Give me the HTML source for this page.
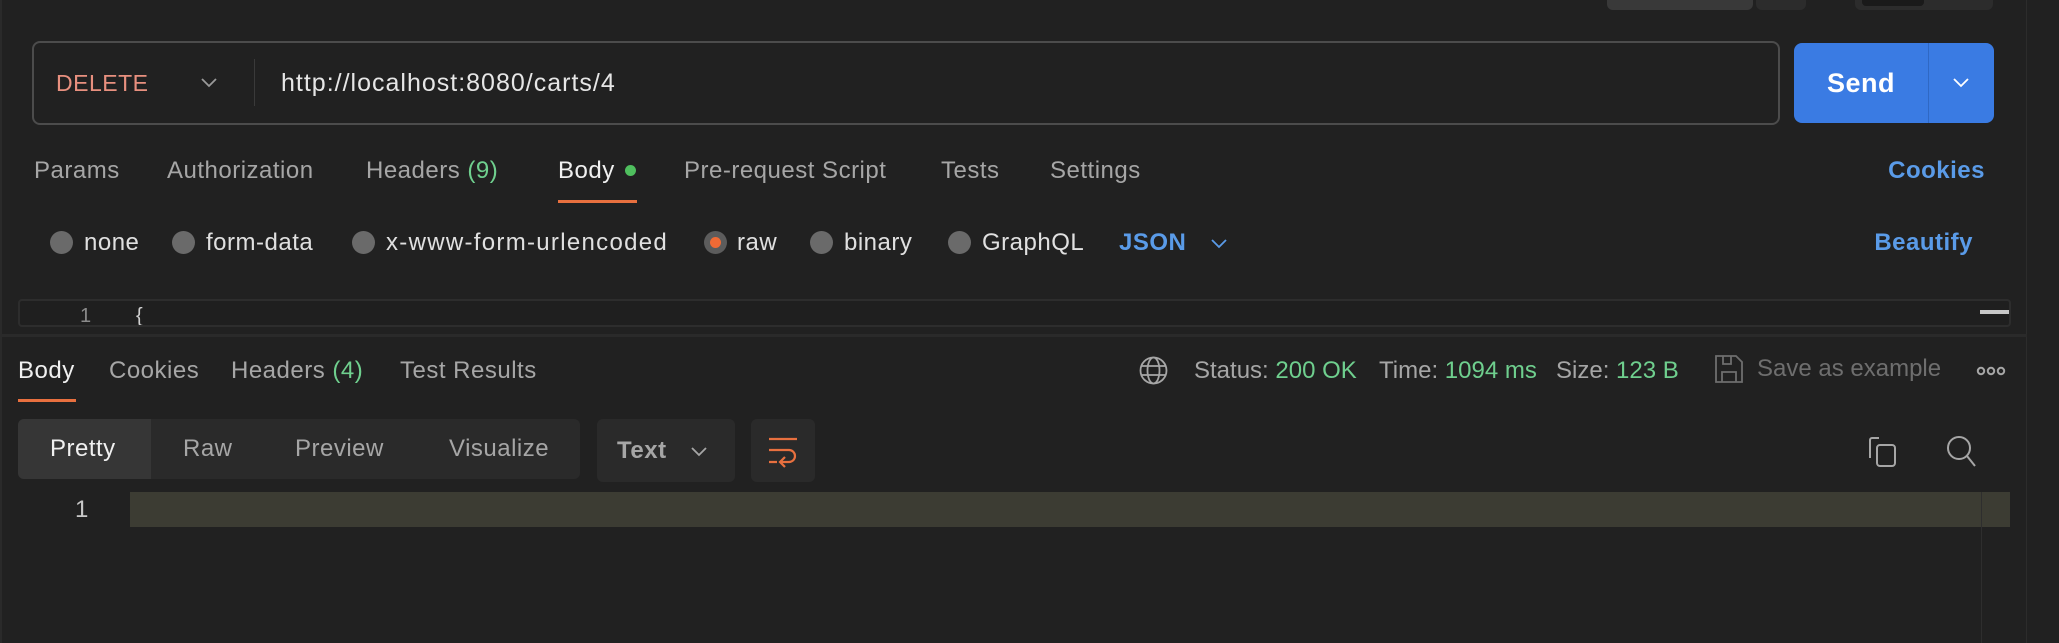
<!DOCTYPE html>
<html><head><meta charset="utf-8"><style>
*{margin:0;padding:0;box-sizing:border-box}
body{width:2059px;height:643px;background:#212121;position:relative;overflow:hidden;font-family:"Liberation Sans",sans-serif;color:#a6a6a6;font-size:24px}
.a{position:absolute;white-space:nowrap}
.t{position:absolute;white-space:nowrap;height:30px;line-height:30px;letter-spacing:0.5px}
.g{color:#6fcf8e}
.b{color:#5a9be8;font-weight:bold}
.r{position:absolute;width:23px;height:23px;border-radius:50%;background:#6a6a6a}
</style></head><body>
<div class="a" style="left:0;top:0;width:2px;height:643px;background:#2a2a2a"></div>
<div class="a" style="left:2026px;top:0;width:1px;height:643px;background:#2c2c2c"></div>
<div class="a" style="left:1607px;top:0;width:146px;height:10px;background:#393939;border-radius:0 0 6px 6px"></div>
<div class="a" style="left:1756px;top:0;width:50px;height:10px;background:#2c2c2c;border-radius:0 0 6px 6px"></div>
<div class="a" style="left:1855px;top:0;width:138px;height:10px;background:#2c2c2c;border-radius:0 0 6px 6px"></div>
<div class="a" style="left:1862px;top:0;width:62px;height:6px;background:#1a1a1a;border-radius:0 0 4px 4px"></div>
<div class="a" style="left:32px;top:41px;width:1748px;height:84px;border:2px solid #4c4c4c;border-radius:8px"></div>
<div class="t" style="left:56px;top:68px;color:#e8907f;font-size:23px">DELETE</div>
<svg class="a" style="left:199px;top:75px" width="20" height="14"><path d="M3 4l7 7 7-7" fill="none" stroke="#9a9a9a" stroke-width="1.8"/></svg>
<div class="a" style="left:254px;top:59px;width:1px;height:47px;background:#3a3a3a"></div>
<div class="t" style="left:281px;top:68px;color:#e6e6e6;font-size:25px;letter-spacing:1px">http://localhost:8080/carts/4</div>
<div class="a" style="left:1794px;top:43px;width:200px;height:80px;background:#3a7be3;border-radius:8px"></div>
<div class="a" style="left:1928px;top:43px;width:1px;height:80px;background:#2f68c4"></div>
<div class="t" style="left:1827px;top:68px;color:#fff;font-weight:bold;font-size:27px">Send</div>
<svg class="a" style="left:1951px;top:75px" width="20" height="14"><path d="M3 4l7 7 7-7" fill="none" stroke="#fff" stroke-width="1.8"/></svg>
<div class="t" style="left:34px;top:156px">Params</div>
<div class="t" style="left:167px;top:156px">Authorization</div>
<div class="t" style="left:366px;top:156px">Headers <span class="g">(9)</span></div>
<div class="t" style="left:558px;top:156px;color:#f0f0f0">Body</div>
<div class="a" style="left:625px;top:165px;width:11px;height:11px;border-radius:50%;background:#4fbf5e"></div>
<div class="t" style="left:684px;top:156px">Pre-request Script</div>
<div class="t" style="left:941px;top:156px">Tests</div>
<div class="t" style="left:1050px;top:156px">Settings</div>
<div class="t b" style="right:74px;top:156px">Cookies</div>
<div class="a" style="left:558px;top:200px;width:79px;height:3px;background:#e8703f"></div>
<div class="r" style="left:50px;top:231px"></div><div class="t" style="left:84px;top:228px;color:#e0e0e0">none</div>
<div class="r" style="left:172px;top:231px"></div><div class="t" style="left:206px;top:228px;color:#e0e0e0">form-data</div>
<div class="r" style="left:352px;top:231px"></div><div class="t" style="left:386px;top:228px;color:#e0e0e0;letter-spacing:1.3px">x-www-form-urlencoded</div>
<div class="r" style="left:704px;top:231px;background:#5c5c5c"></div><div class="a" style="left:710px;top:237px;width:11px;height:11px;border-radius:50%;background:#f06a35"></div><div class="t" style="left:737px;top:228px;color:#e0e0e0">raw</div>
<div class="r" style="left:810px;top:231px"></div><div class="t" style="left:844px;top:228px;color:#e0e0e0">binary</div>
<div class="r" style="left:948px;top:231px"></div><div class="t" style="left:982px;top:228px;color:#e0e0e0">GraphQL</div>
<div class="t b" style="left:1119px;top:228px">JSON</div>
<svg class="a" style="left:1209px;top:236px" width="20" height="14"><path d="M3 4l7 7 7-7" fill="none" stroke="#5a9be8" stroke-width="1.8"/></svg>
<div class="t b" style="right:86px;top:228px">Beautify</div>
<div class="a" style="left:18px;top:299px;width:1993px;height:28px;border:2px solid #2d2d2d;border-radius:4px;background:#1f1f1f;overflow:hidden">
<div class="a" style="left:60px;top:4px;font-size:20px;color:#8a8a8a">1</div>
<div class="a" style="left:116px;top:4px;font-size:20px;color:#cfcfcf">{</div>
<div class="a" style="left:1960px;top:9px;width:30px;height:4px;background:#c8c8c8"></div>
</div>
<div class="a" style="left:0;top:334px;width:2027px;height:3px;background:#2a2a2a"></div>
<div class="t" style="left:18px;top:356px;color:#f0f0f0">Body</div>
<div class="t" style="left:109px;top:356px">Cookies</div>
<div class="t" style="left:231px;top:356px">Headers <span class="g">(4)</span></div>
<div class="t" style="left:400px;top:356px">Test Results</div>
<div class="a" style="left:18px;top:399px;width:58px;height:3px;background:#e8703f"></div>
<svg class="a" style="left:1139px;top:356px" width="29" height="29" fill="none" stroke="#a6a6a6" stroke-width="1.8"><circle cx="14.5" cy="14.5" r="13"/><ellipse cx="14.5" cy="14.5" rx="6" ry="13"/><path d="M2 10h25M2 19h25"/></svg>
<div class="t" style="left:1194px;top:356px;letter-spacing:0">Status: <span class="g">200 OK</span></div>
<div class="t" style="left:1379px;top:356px;letter-spacing:0">Time: <span class="g">1094 ms</span></div>
<div class="t" style="left:1556px;top:356px;letter-spacing:0">Size: <span class="g">123 B</span></div>
<svg class="a" style="left:1714px;top:354px" width="30" height="30" fill="none" stroke="#6e6e6e" stroke-width="1.8"><path d="M2 2h20l6 6v20H2z M9 2v8h8V2 M8 28V18h14v10"/></svg>
<div class="t" style="left:1757px;top:354px;color:#6e6e6e;letter-spacing:0">Save as example</div>
<svg class="a" style="left:1976px;top:364px" width="30" height="14" fill="none" stroke="#a6a6a6" stroke-width="2"><circle cx="5" cy="7" r="3.2"/><circle cx="15" cy="7" r="3.2"/><circle cx="25" cy="7" r="3.2"/></svg>
<div class="a" style="left:18px;top:419px;width:562px;height:60px;background:#2a2a2a;border-radius:6px"></div>
<div class="a" style="left:18px;top:419px;width:133px;height:60px;background:#363636;border-radius:6px 0 0 6px"></div>
<div class="t" style="left:50px;top:434px;color:#f0f0f0">Pretty</div>
<div class="t" style="left:183px;top:434px">Raw</div>
<div class="t" style="left:295px;top:434px">Preview</div>
<div class="t" style="left:449px;top:434px">Visualize</div>
<div class="a" style="left:597px;top:419px;width:138px;height:63px;background:#2a2a2a;border-radius:6px"></div>
<div class="t" style="left:617px;top:436px;font-weight:bold;color:#a6a6a6">Text</div>
<svg class="a" style="left:689px;top:444px" width="20" height="14"><path d="M3 4l7 7 7-7" fill="none" stroke="#a6a6a6" stroke-width="1.8"/></svg>
<div class="a" style="left:751px;top:419px;width:64px;height:63px;background:#2a2a2a;border-radius:6px"></div>
<svg class="a" style="left:766px;top:436px" width="34" height="32" fill="none" stroke="#e8703f" stroke-width="2.2"><path d="M3 3h28 M3 14h20a6 6 0 0 1 0 12h-8 M19 21l-5 5 5 5 M3 26h8"/></svg>
<svg class="a" style="left:1868px;top:436px" width="30" height="32" fill="none" stroke="#a6a6a6" stroke-width="2"><path d="M11 2H4a2 2 0 0 0-2 2v18"/><rect x="9" y="9" width="18" height="21" rx="3"/></svg>
<svg class="a" style="left:1946px;top:435px" width="32" height="34" fill="none" stroke="#a6a6a6" stroke-width="2"><circle cx="13" cy="13" r="11"/><path d="M21 21l8 10"/></svg>
<div class="a" style="left:130px;top:492px;width:1880px;height:35px;background:#3c3c33"></div>
<div class="a" style="left:1981px;top:492px;width:1px;height:151px;background:#2e2e2e"></div>
<div class="t" style="left:75px;top:495px;color:#c8c8c8">1</div>
</body></html>
